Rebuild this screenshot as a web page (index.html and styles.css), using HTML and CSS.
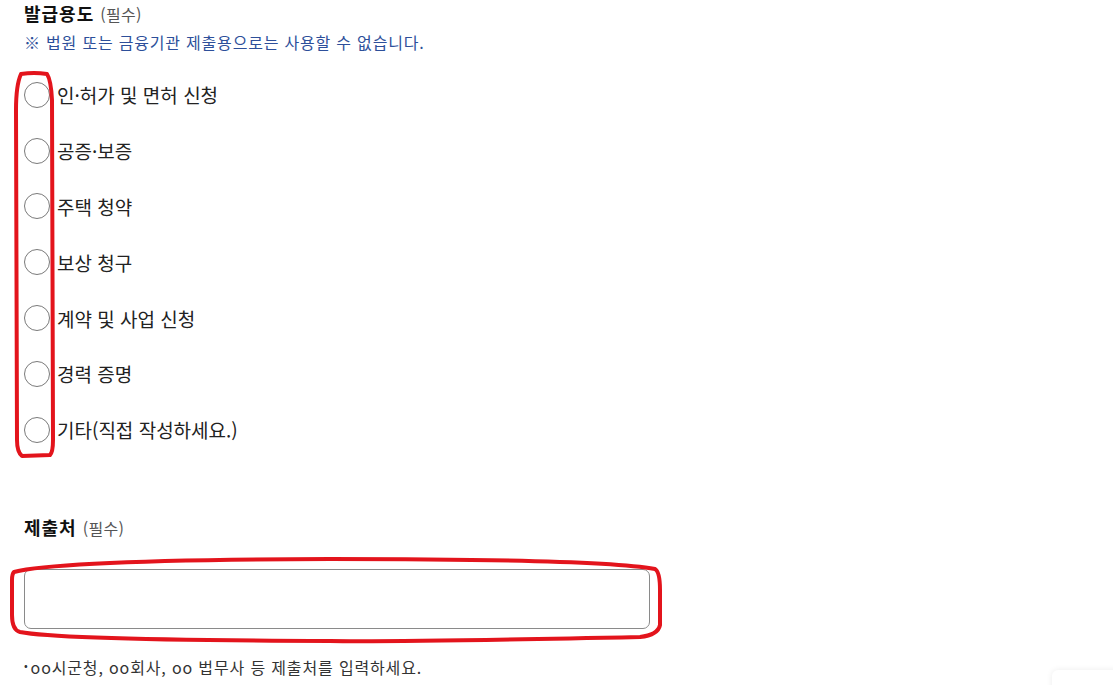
FILE: index.html
```html
<!DOCTYPE html>
<html lang="ko">
<head>
<meta charset="utf-8">
<link rel="stylesheet" href="styles.css">
</head>
<body>
<main class="form">
  <section class="field">
    <h2 class="field-title">발급용도 <span class="req">(필수)</span></h2>
    <p class="note">※ 법원 또는 금융기관 제출용으로는 사용할 수 없습니다.</p>
    <ul class="radios">
      <li class="radio"><span class="circle"></span><span class="label">인·허가 및 면허 신청</span></li>
      <li class="radio"><span class="circle"></span><span class="label">공증·보증</span></li>
      <li class="radio"><span class="circle"></span><span class="label">주택 청약</span></li>
      <li class="radio"><span class="circle"></span><span class="label">보상 청구</span></li>
      <li class="radio"><span class="circle"></span><span class="label">계약 및 사업 신청</span></li>
      <li class="radio"><span class="circle"></span><span class="label">경력 증명</span></li>
      <li class="radio"><span class="circle"></span><span class="label">기타(직접 작성하세요.)</span></li>
    </ul>
  </section>
  <section class="field field-2">
    <h2 class="field-title">제출처 <span class="req">(필수)</span></h2>
    <div class="input"></div>
    <p class="hint"><span class="dot">•</span>oo시군청, oo회사, oo 법무사 등 제출처를 입력하세요.</p>
  </section>
</main>
<svg class="marks" width="1113" height="685" viewBox="0 0 1113 685" xmlns="http://www.w3.org/2000/svg">
  <path d="M21 74 Q34 72 47 74 Q51 80 52 100 L53 440 Q53 452 50 455 L22 456 Q17 452 17 440 L16 110 Q16 85 21 74 Z" fill="none" stroke="#e3141c" stroke-width="4" stroke-linejoin="round"/>
  <path d="M14 572 Q60 560 330 559 Q600 559 655 569 Q660 572 660 590 L660 625 Q658 635 640 637 Q400 642 330 641 Q60 640 20 632 Q12 630 12 615 L12 580 Q12 574 14 572 Z" fill="none" stroke="#e3141c" stroke-width="4" stroke-linejoin="round"/>
</svg>
<div class="float-btn"></div>
</body>
</html>
```
FILE: styles.css
```css
* { box-sizing: border-box; }
html, body { margin: 0; padding: 0; background: #fff; }
body {
  font-family: "Noto Sans CJK KR", "Noto Sans", sans-serif;
  color: #222;
  width: 1113px;
  height: 685px;
  overflow: hidden;
  position: relative;
}
.form {
  padding: 0 0 0 24px;
  display: flex;
  flex-direction: column;
}
.field { display: flex; flex-direction: column; }
.field-title {
  margin: 0;
  height: 26px;
  line-height: 26px;
  font-size: 18px;
  font-weight: 700;
  color: #111;
  letter-spacing: 1px;
}
.req {
  font-size: 16px;
  font-weight: 400;
  color: #555;
  letter-spacing: 0.3px;
}
.note {
  margin: 6px 0 0;
  height: 20px;
  line-height: 20px;
  font-size: 16px;
  color: #2d4f9a;
  letter-spacing: 0.8px;
}
.radios {
  list-style: none;
  margin: 15px 0 0;
  padding: 0;
  display: flex;
  flex-direction: column;
}
.radio {
  height: 55.8px;
  display: flex;
  align-items: center;
  gap: 7px;
}
.circle {
  width: 26px;
  height: 26px;
  border: 1px solid #7a7a7a;
  border-radius: 50%;
  flex: none;
  background: #fff;
}
.label {
  font-size: 19px;
  color: #222;
  letter-spacing: 0;
}
.field-2 { margin-top: 56px; }
.input {
  margin-top: 29px;
  width: 626px;
  height: 60px;
  border: 1px solid #8a8a8a;
  border-radius: 7px;
}
.hint {
  margin: 27px 0 0;
  height: 22px;
  line-height: 22px;
  font-size: 16px;
  color: #333;
  letter-spacing: 0.85px;
}
.dot { font-size: 11px; margin-right: 2px; position: relative; top: -4px; }
.marks {
  position: absolute;
  left: 0;
  top: 0;
  pointer-events: none;
}
.float-btn {
  position: absolute;
  left: 1052px;
  top: 670px;
  width: 80px;
  height: 40px;
  border-radius: 6px;
  background: #fff;
  box-shadow: 0 0 6px rgba(0,0,0,0.08);
}
```
